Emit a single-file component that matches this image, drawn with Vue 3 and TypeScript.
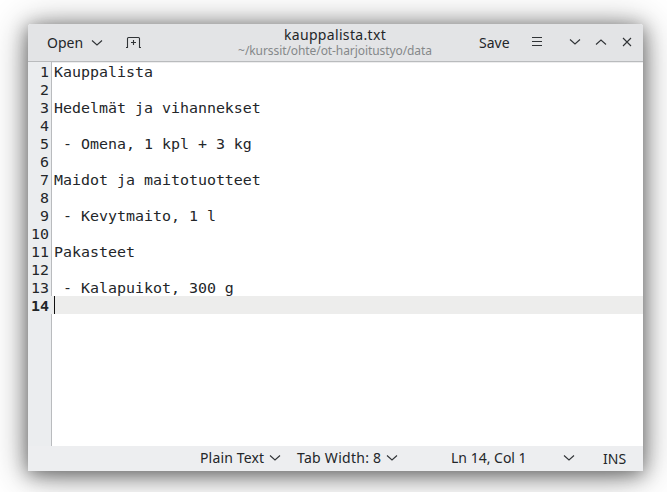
<script setup lang="ts">
const lines: string[] = [
  'Kauppalista',
  '',
  'Hedelmät ja vihannekset',
  '',
  ' - Omena, 1 kpl + 3 kg',
  '',
  'Maidot ja maitotuotteet',
  '',
  ' - Kevytmaito, 1 l',
  '',
  'Pakasteet',
  '',
  ' - Kalapuikot, 300 g',
  '',
]
const current = 14
</script>

<template>
  <div class="desktop">
    <div class="window">
      <header class="header">
        <div class="left">
          <span class="open">Open</span>
          <svg class="chev" width="12" height="8" viewBox="0 0 12 8"><path d="M1 1.5 6 6l5-4.5" /></svg>
          <svg class="newtab" width="16" height="13" viewBox="0 0 16 13">
            <path d="M0 11.5h1.5V2.5q0-1 1-1h10q1 0 1 1v9H15M7.5 4v5M5 6.5h5" />
          </svg>
        </div>
        <div class="titles">
          <div class="title">kauppalista.txt</div>
          <div class="subtitle">~/kurssit/ohte/ot-harjoitustyo/data</div>
        </div>
        <div class="right">
          <span class="save">Save</span>
          <svg class="burger" width="10" height="10" viewBox="0 0 10 10"><path d="M0 .5h10M0 4.5h10M0 8.5h10" /></svg>
          <svg class="chev" width="12" height="8" viewBox="0 0 12 8"><path d="M1 1.5 6 6l5-4.5" /></svg>
          <svg class="chev up" width="12" height="8" viewBox="0 0 12 8"><path d="M1 6.5 6 2l5 4.5" /></svg>
          <svg class="close" width="10" height="10" viewBox="0 0 10 10"><path d="M1 1l8 8M9 1 1 9" /></svg>
        </div>
      </header>
      <main class="editor">
        <div v-for="(line, i) in lines" :key="i" class="row" :class="{ current: i + 1 === current }">
          <span class="num">{{ i + 1 }}</span>
          <span class="code">{{ line }}</span>
        </div>
        <div class="rest"><span class="num"></span></div>
      </main>
      <footer class="status">
        <span class="plain">Plain Text</span>
        <svg class="chev" width="12" height="8" viewBox="0 0 12 8"><path d="M1 1.5 6 6l5-4.5" /></svg>
        <span class="tab">Tab Width: 8</span>
        <svg class="chev" width="12" height="8" viewBox="0 0 12 8"><path d="M1 1.5 6 6l5-4.5" /></svg>
        <span class="pos">Ln 14, Col 1</span>
        <svg class="chev" width="12" height="8" viewBox="0 0 12 8"><path d="M1 1.5 6 6l5-4.5" /></svg>
        <span class="ins">INS</span>
      </footer>
    </div>
  </div>
</template>

<style>
body {
  background: #fff;
  overflow: hidden;
}
</style>

<style scoped>
.desktop {
  box-sizing: border-box;
  width: 667px;
  height: 492px;
  padding: 24px 24px 21px 28px;
  overflow: hidden;
  font-family: "Noto Sans", "Open Sans", sans-serif;
  font-size: 14px;
  color: #232629;
}
.window {
  display: flex;
  flex-direction: column;
  width: 615px;
  height: 447px;
  border-radius: 3px 3px 0 0;
  background: #fff;
  box-shadow: 0 3px 18px rgba(0, 0, 0, 0.42), 0 3px 36px rgba(0, 0, 0, 0.45);
}
svg {
  display: block;
  flex: none;
  fill: none;
  stroke: #303336;
  stroke-width: 1.1;
}
span {
  white-space: pre;
}
.header {
  box-sizing: border-box;
  display: flex;
  height: 38px;
  flex: none;
  border-bottom: 1px solid #b9bbbd;
  border-radius: 3px 3px 0 0;
  background: #e3e4e6;
}
.left {
  box-sizing: border-box;
  display: flex;
  flex: none;
  align-items: center;
  width: 190px;
  padding-left: 19px;
}
.open {
  width: 44px;
}
.newtab {
  margin-left: 23px;
}
.titles {
  flex: none;
  width: 234px;
  text-align: center;
}
.title {
  height: 20px;
  line-height: 22px;
  letter-spacing: 0.33px;
}
.subtitle {
  font-size: 12px;
  line-height: 14px;
  letter-spacing: -0.08px;
  color: #85888a;
}
.right {
  display: flex;
  align-items: center;
  padding-left: 27px;
}
.right svg {
  margin-bottom: 1px;
}
.right .save {
  width: 53px;
}
.right .burger {
  margin-right: 27px;
}
.right .up {
  margin-right: 15px;
  margin-left: 14px;
}
.editor {
  display: flex;
  flex: 1;
  flex-direction: column;
  box-shadow: inset 0 1px #ededee;
  font: 14.95px/20px "DejaVu Sans Mono", monospace;
}
.row {
  display: flex;
  height: 18px;
}
.num {
  box-sizing: border-box;
  width: 24px;
  flex: none;
  padding-right: 2px;
  border-right: 1px solid #b9bbbe;
  background: #ebedef;
  text-align: right;
  direction: rtl;
}
.code {
  flex: 1;
  padding-left: 2px;
}
.current {
  background: #ededec;
}
.current .num {
  border-color: #ebedef;
  font-weight: bold;
}
.current .code {
  margin-left: 2px;
  padding: 0;
  border-left: 1px solid #111;
}
.rest {
  display: flex;
  flex: 1;
}
.status {
  box-sizing: border-box;
  display: flex;
  align-items: center;
  height: 25px;
  flex: none;
  padding: 0 0 2px 172px;
  background: #edeef0;
}
.plain {
  width: 69px;
  letter-spacing: 0.15px;
}
.tab {
  width: 89px;
  margin-left: 16px;
  letter-spacing: 0.27px;
}
.pos {
  width: 112px;
  margin-left: 53px;
}
.ins {
  margin-left: 28px;
  padding-top: 2px;
}
</style>
